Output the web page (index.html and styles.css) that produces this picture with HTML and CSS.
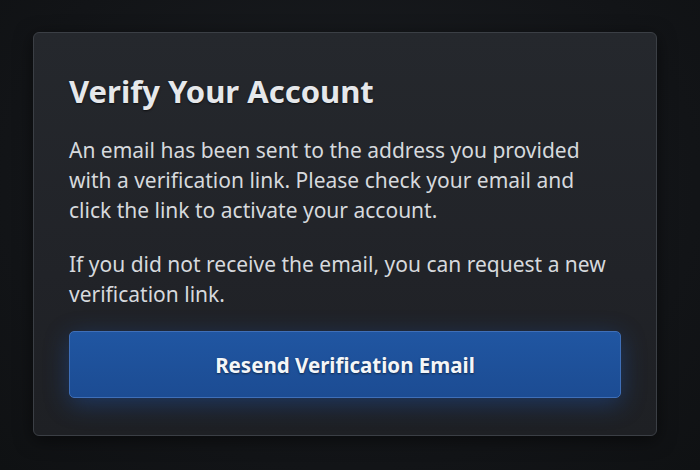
FILE: index.html
```html
<!DOCTYPE html>
<html>
<head>
<meta charset="utf-8">
<link rel="stylesheet" href="styles.css">
</head>
<body>
<main class="card">
  <h1 class="title">Verify Your Account</h1>
  <p class="text text-first">An email has been sent to the address you provided with a verification link. Please check your email and click the link to activate your account.</p>
  <p class="text">If you did not receive the email, you can request a new verification link.</p>
  <button class="btn">Resend Verification Email</button>
</main>
</body>
</html>
```
FILE: styles.css
```css
html, body {
  margin: 0;
  padding: 0;
}
body {
  width: 700px;
  height: 470px;
  background: radial-gradient(ellipse at 50% 40%, #1a1d21 0%, #121417 70%, #0f1113 100%);
  font-family: "Noto Sans", "Open Sans", sans-serif;
  padding: 32px 0 0 33px;
  box-sizing: border-box;
  overflow: hidden;
}
.card {
  width: 624px;
  height: 404px;
  box-sizing: border-box;
  border: 1px solid #3b3f45;
  border-radius: 6px;
  background: linear-gradient(180deg, #25282d 0%, #212328 60%, #1e2024 100%);
  box-shadow: 0 4px 18px rgba(0,0,0,0.5);
  padding: 38px 35px 0 35px;
  display: flex;
  flex-direction: column;
}
.title {
  margin: 0 0 24px;
  font-size: 31px;
  font-weight: 700;
  line-height: 40px;
  color: #e6e8eb;
  text-shadow: 0 1px 2px rgba(0,0,0,0.6);
}
.text {
  margin: 0;
  max-width: 545px;
  font-size: 21px;
  line-height: 30px;
  color: #d6d9dd;
}
.text-first {
  margin-bottom: 24px;
}
.btn {
  margin-top: 22px;
  height: 67px;
  width: 100%;
  border: 1px solid #3f6fb8;
  border-radius: 5px;
  background: linear-gradient(180deg, #2056a2 0%, #1c4c93 100%);
  box-shadow: 0 6px 24px rgba(30, 90, 190, 0.4);
  color: #f4f6f8;
  font-family: "Noto Sans", "Open Sans", sans-serif;
  font-size: 20.5px;
  font-weight: 700;
  text-shadow: 0 1px 2px rgba(0,0,0,0.5);
  cursor: pointer;
}
```
